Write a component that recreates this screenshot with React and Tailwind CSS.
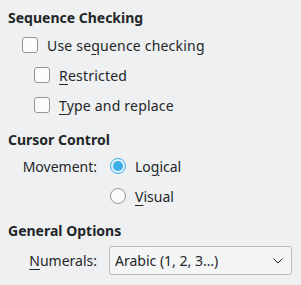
import React from "react";

function Checkbox() {
  return (
    <span className="box-border block h-[16px] w-[16px] shrink-0 rounded-[3px] border border-[#93969a] bg-[#fcfcfc]" />
  );
}

function Radio({ checked }) {
  if (checked) {
    return (
      <span className="box-border flex h-[16px] w-[16px] shrink-0 items-center justify-center rounded-full border border-[#3daee9] bg-[#e3f1fa]">
        <span className="block h-[10px] w-[10px] rounded-full bg-[#3daee9]" />
      </span>
    );
  }
  return (
    <span className="box-border block h-[16px] w-[16px] shrink-0 rounded-full border border-[#93969a] bg-[#fcfcfc]" />
  );
}

function U({ children }) {
  return <span className="underline decoration-1 underline-offset-[3px]">{children}</span>;
}

export default function App() {
  return (
    <div
      className="h-[285px] w-[301px] bg-[#eff0f1] pt-[8px] text-[14px] leading-[19px] text-[#232629]"
      style={{ fontFamily: '"Noto Sans", "Open Sans", sans-serif' }}
    >
      <div className="pl-[8px] font-bold">Sequence Checking</div>
      <div className="mt-[3px]">
        <div className="flex h-[30px] items-center pl-[22px]">
          <Checkbox />
          <span className="ml-[9px] tracking-[0.2px]">
            Use se<U>q</U>uence checking
          </span>
        </div>
        <div className="flex h-[30px] items-center pl-[34px]">
          <Checkbox />
          <span className="ml-[9px] tracking-[0.2px]">
            <U>R</U>estricted
          </span>
        </div>
        <div className="flex h-[30px] items-center pl-[34px]">
          <Checkbox />
          <span className="ml-[9px] tracking-[0.2px]">
            <U>T</U>ype and replace
          </span>
        </div>
      </div>

      <div className="mt-[10px] pl-[8px] font-bold">Cursor Control</div>
      <div className="mt-[2px]">
        <div className="flex h-[30px] items-center">
          <div className="w-[97px] text-right">Movement:</div>
          <div className="ml-[13px] flex items-center">
            <Radio checked />
            <span className="ml-[9px]">
              Lo<U>g</U>ical
            </span>
          </div>
        </div>
        <div className="flex h-[30px] items-center">
          <div className="w-[97px]" />
          <div className="ml-[13px] flex items-center">
            <Radio />
            <span className="ml-[9px]">
              <U>V</U>isual
            </span>
          </div>
        </div>
      </div>

      <div className="mt-[10px] pl-[8px] font-bold">General Options</div>
      <div className="mt-[6px] flex items-center">
        <div className="w-[97px] text-right">
          <U>N</U>umerals:
        </div>
        <div className="ml-[12px] box-border flex h-[29px] w-[183px] items-center justify-between rounded-[3px] border border-[#b8babc] bg-[#f4f5f5] pl-[5px] pr-[8px]">
          <span>Arabic (1, 2, 3…)</span>
          <svg width="10" height="6" viewBox="0 0 10 6" fill="none">
            <path d="M0.5 0.5 L5 5 L9.5 0.5" stroke="#232629" strokeWidth="1" />
          </svg>
        </div>
      </div>
    </div>
  );
}
